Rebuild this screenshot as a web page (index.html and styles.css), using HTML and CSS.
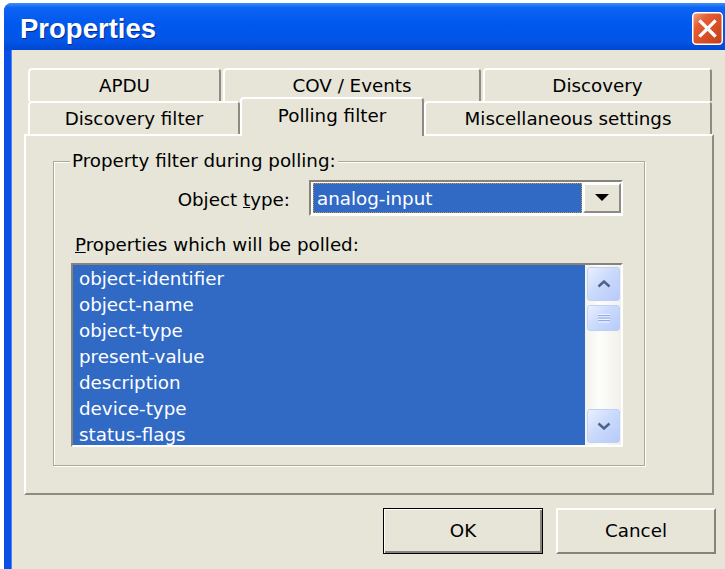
FILE: index.html
```html
<!DOCTYPE html>
<html lang="en">
<head>
<meta charset="utf-8">
<title>Properties</title>
<link rel="stylesheet" href="styles.css">
</head>
<body>
<div class="window">
  <div class="titlebar">
    <span class="title">Properties</span>
    <span class="close" aria-label="Close">
      <svg width="31" height="33" viewBox="0 0 31 33">
        <defs>
          <linearGradient id="closeFill" x1="0" y1="0" x2="1" y2="1">
            <stop offset="0" stop-color="#f2a488"/>
            <stop offset="0.3" stop-color="#e45d33"/>
            <stop offset="1" stop-color="#c33d16"/>
          </linearGradient>
        </defs>
        <rect x="0.75" y="0.75" width="29.5" height="31.5" rx="3.5" fill="url(#closeFill)" stroke="#fff" stroke-width="1.5"/>
        <path d="M8.5 9.5 L22.5 23.5 M22.5 9.5 L8.5 23.5" stroke="#fff" stroke-width="3.2" stroke-linecap="square"/>
      </svg>
    </span>
  </div>

  <div class="client">
    <div class="tabs">
      <div class="tab-row back">
        <div class="tab w-apdu">APDU</div>
        <div class="tab w-cov">COV / Events</div>
        <div class="tab w-disc">Discovery</div>
      </div>
      <div class="tab-row front">
        <div class="tab w-dfilter">Discovery filter</div>
        <div class="tab active w-pfilter">Polling filter</div>
        <div class="tab w-misc">Miscellaneous settings</div>
      </div>
    </div>

    <div class="panel">
      <fieldset class="group">
        <legend>Property filter during polling:</legend>

        <div class="type-row">
          <span class="type-label">Object <u>t</u>ype:</span>
          <div class="combo">
            <div class="combo-value"><span>analog-input</span></div>
            <div class="combo-btn">
              <svg width="14" height="8" viewBox="0 0 14 8"><polygon points="0,0 14,0 7,7" fill="#000"/></svg>
            </div>
          </div>
        </div>

        <div class="list-label"><u>P</u>roperties which will be polled:</div>

        <div class="listbox">
          <ul class="items">
            <li>object-identifier</li>
            <li>object-name</li>
            <li>object-type</li>
            <li>present-value</li>
            <li>description</li>
            <li>device-type</li>
            <li>status-flags</li>
          </ul>
          <div class="scrollbar">
            <div class="sb-btn">
              <svg width="14" height="8" viewBox="0 0 14 8"><path d="M1.5 6.5 L7 1.5 L12.5 6.5" fill="none" stroke="#4d6185" stroke-width="2.4"/></svg>
            </div>
            <div class="sb-thumb">
              <svg width="12" height="10" viewBox="0 0 12 10">
                <path d="M0 1.5 H12 M0 4 H12 M0 6.5 H12 M0 9 H12" stroke="#eef3fe" stroke-width="1"/>
                <path d="M0 2.5 H12 M0 5 H12 M0 7.5 H12" stroke="#8faaf0" stroke-width="1"/>
              </svg>
            </div>
            <div class="sb-track"></div>
            <div class="sb-btn">
              <svg width="14" height="8" viewBox="0 0 14 8"><path d="M1.5 1.5 L7 6.5 L12.5 1.5" fill="none" stroke="#4d6185" stroke-width="2.4"/></svg>
            </div>
          </div>
        </div>
      </fieldset>
    </div>

    <div class="buttons">
      <button class="btn default">OK</button>
      <button class="btn">Cancel</button>
    </div>
  </div>
</div>
</body>
</html>
```

FILE: styles.css
```css
html, body {
  margin: 0;
  height: 100%;
  overflow: hidden;
  background: #fff;
}

body {
  font-family: "DejaVu Sans", Verdana, sans-serif;
  font-size: 18.3px;
  line-height: 22px;
  color: #000;
}

/* dialog frame */
.window {
  margin: 3px 0 0 4px;
  width: 730px;
  height: 580px;
  background: #0a4ee4;
  border-radius: 8px 8px 0 0;
  display: flex;
  flex-direction: column;
  overflow: hidden;
}

.titlebar {
  flex: none;
  box-sizing: border-box;
  height: 47px;
  padding: 4px 11px 0 16px;
  display: flex;
  align-items: center;
  justify-content: space-between;
  background: linear-gradient(#3d8ef7 0, #0d63f2 10%, #0058ee 45%, #0355e6 80%, #0048d2 100%);
}

.title {
  font-family: "Liberation Sans", Arial, sans-serif;
  font-weight: bold;
  font-size: 27.5px;
  color: #fff;
  text-shadow: 1px 1px 0 #0b2a8a;
}

.close {
  display: flex;
}

.client {
  flex: none;
  height: 517px;
  margin-left: 7px;
  border-left: 1px solid #4f86f2;
  background: #e6e5d8;
  display: flex;
  flex-direction: column;
  padding: 18px 0 0 12px;
}

/* tab strip: two rows, the selected row sits against the page */
.tabs {
  margin-left: 4px;
  width: 684px;
}

.tab-row {
  display: flex;
  height: 33px;
}

.tab-row.back {
  gap: 2px;
}

.tab {
  box-sizing: border-box;
  height: 33px;
  display: flex;
  align-items: center;
  justify-content: center;
  background: #e6e5d8;
  border-top: 2px solid #fff;
  border-left: 2px solid #fff;
  border-right: 2px solid #8d8c84;
  border-radius: 4px 4px 0 0;
  white-space: nowrap;
}

.tab.active {
  position: relative;
  z-index: 2;
  height: 39px;
  margin-top: -4px;
  padding-bottom: 4px;
}

.w-apdu { width: 193px; }
.w-cov { width: 258px; }
.w-disc { width: 229px; }
.w-dfilter { width: 212px; }
.w-pfilter { width: 184px; }
.w-misc { width: 288px; }

.panel {
  box-sizing: border-box;
  width: 690px;
  height: 361px;
  border: 2px solid;
  border-color: #fff #8d8c84 #8d8c84 #fff;
  padding: 14px 0 0 27px;
}

/* etched group box */
.group {
  box-sizing: border-box;
  width: 592px;
  margin: 0;
  padding: 0 21px 18px 18px;
  border: 1px solid #aca899;
  box-shadow: inset 1px 1px 0 #fff, 1px 1px 0 #fff;
}

.group legend {
  margin-left: -2px;
  padding: 0 2px;
  line-height: 22px;
  background: #e6e5d8;
}

.type-row {
  margin-top: 8px;
  display: flex;
  justify-content: flex-end;
  align-items: center;
  gap: 19px;
}

.type-label {
  padding-top: 3px;
}

.combo {
  box-sizing: border-box;
  width: 314px;
  height: 36px;
  padding: 1px 0 1px 2px;
  border: 2px solid;
  border-color: #85837a #fff #fff #85837a;
  background: #fff;
  display: flex;
  gap: 1px;
}

.combo-value {
  flex: 1;
  box-sizing: border-box;
  display: flex;
  align-items: center;
  padding: 2px 0 0 3px;
  background: #316ac5;
  border: 1px dotted #c89a3c;
  color: #fff;
}

.combo-btn {
  box-sizing: border-box;
  width: 38px;
  display: flex;
  align-items: center;
  justify-content: center;
  background: #e6e5d8;
  border: 2px solid;
  border-color: #fff #8d8c84 #8d8c84 #fff;
}

.list-label {
  margin-top: 18px;
  padding-left: 3px;
}

.listbox {
  box-sizing: border-box;
  height: 184px;
  margin: 7px 0 0 -1px;
  border: 2px solid;
  border-color: #85837a #fff #fff #85837a;
  background: #316ac5;
  display: flex;
}

.items {
  flex: 1;
  margin: 0;
  padding: 1px 0 0 6px;
  list-style: none;
  overflow: hidden;
  color: #fff;
}

.items li {
  height: 26px;
  line-height: 26px;
}

/* Luna style vertical scrollbar */
.scrollbar {
  width: 36px;
  display: flex;
  flex-direction: column;
  background: linear-gradient(90deg, #f3f2ec, #fdfdfa 40%, #f1f0ea);
  padding: 2px 1px 2px 2px;
  box-sizing: border-box;
}

.sb-btn,
.sb-thumb {
  box-sizing: border-box;
  border: 1px solid #bcd0f8;
  border-radius: 3px;
  background: linear-gradient(135deg, #eaf0fe 0%, #cbdafc 45%, #b7cafa 100%);
  display: flex;
  align-items: center;
  justify-content: center;
}

.sb-btn {
  height: 34px;
}

.sb-thumb {
  height: 26px;
  margin-top: 4px;
}

.sb-track {
  flex: 1;
}

/* dialog buttons */
.buttons {
  width: 692px;
  margin-top: 13px;
  display: flex;
  justify-content: flex-end;
  gap: 13px;
}

.btn {
  box-sizing: border-box;
  width: 160px;
  height: 46px;
  padding: 0;
  font: inherit;
  color: #000;
  background: #e6e5d8;
  border: 2px solid;
  border-color: #fff #85837a #85837a #fff;
}

.btn.default {
  border: 1px solid #000;
  box-shadow: inset 1px 1px 0 #fff, inset -2px -2px 0 #85837a;
}
```
